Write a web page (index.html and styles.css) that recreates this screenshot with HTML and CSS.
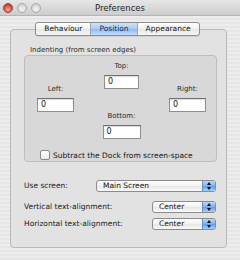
FILE: index.html
```html
<!DOCTYPE html>
<html lang="en">
    <head>
        <meta charset="utf-8">
        <link rel="stylesheet" href="styles.css">
    </head>
    <body>
        <div class="window">
            <header class="titlebar">
                <div class="lights">
                    <span class="light close"></span>
                    <span class="light"></span>
                    <span class="light"></span>
                </div>
                <div class="title">Preferences</div>
            </header>
            <main class="content">
                <nav class="tabs">
                    <div class="tab">Behaviour</div>
                    <div class="tab active">Position</div>
                    <div class="tab">Appearance</div>
                </nav>
                <section class="panel">
                    <div class="group-label">Indenting (from screen edges)</div>
                    <div class="group">
                        <div class="edges">
                            <div class="edge side">
                                <label>Left:</label>
                                <div class="field">0</div>
                            </div>
                            <div class="edge middle">
                                <label>Top:</label>
                                <div class="field">0</div>
                                <label class="bottom-label">Bottom:</label>
                                <div class="field wide">0</div>
                            </div>
                            <div class="edge side">
                                <label>Right:</label>
                                <div class="field">0</div>
                            </div>
                        </div>
                        <div class="check-row">
                            <span class="checkbox"></span>
                            <span>Subtract the Dock from screen-space</span>
                        </div>
                    </div>
                    <div class="row first">
                        <span class="row-label">Use screen:</span>
                        <div class="popup screen">
                            <span>Main Screen</span>
                            <span class="arrows"></span>
                        </div>
                    </div>
                    <div class="row">
                        <span class="row-label">Vertical text-alignment:</span>
                        <div class="popup small">
                            <span>Center</span>
                            <span class="arrows"></span>
                        </div>
                    </div>
                    <div class="row">
                        <span class="row-label">Horizontal text-alignment:</span>
                        <div class="popup small">
                            <span>Center</span>
                            <span class="arrows"></span>
                        </div>
                    </div>
                </section>
            </main>
        </div>
    </body>
</html>
```

FILE: styles.css
```css
html,body{
    margin: 0;
    padding: 0;
}
body{
    width:240px;
    height:260px;
    overflow:hidden;
    font-family:"DejaVu Sans", sans-serif;
    font-size:7.5px;
    color:#141414;
}
.window{
    height:260px;
    background:#ebebeb repeating-linear-gradient(#ededed 0, #ededed 2px, #e6e6e6 2px, #e6e6e6 4px);
}
.titlebar{
    height:15px;
    display:flex;
    align-items:center;
    position:relative;
    background:linear-gradient(#e6e6e6, #cdcdcd);
    border-bottom:1px solid #b4b4b4;
}
.lights{
    display:flex;
    gap:4px;
    padding-left:3px;
}
.light{
    width:10px;
    height:10px;
    border-radius:50%;
    box-sizing:border-box;
    border:1px solid #a8a8a8;
    background:radial-gradient(circle at 50% 70%, #f4f4f4, #c8c8c8);
}
.light.close{
    border-color:#9a3a38;
    background:radial-gradient(circle at 50% 70%, #f5a8a0, #c9423c 70%);
}
.title{
    position:absolute;
    left:0;
    right:0;
    text-align:center;
    font-size:8.5px;
    color:#262626;
}
.content{
    padding:6px 13px 0 10px;
}
.tabs{
    display:flex;
    width:fit-content;
    margin:0 auto -7px;
    position:relative;
    left:-1px;
    border:1px solid #8e8e8e;
    border-radius:3px;
    background:linear-gradient(#ffffff, #f1f1f1 50%, #e6e6e6 51%, #f7f7f7);
    box-shadow:0 1px 0 rgba(0,0,0,0.08);
}
.tab{
    height:12px;
    line-height:12px;
    padding:0 8px;
    border-left:1px solid #a6a6a6;
}
.tab:first-child{
    border-left:none;
}
.tab.active{
    background:linear-gradient(#cfe4fb, #a8cbf3 50%, #8dbbee 51%, #c2dcf8);
    color:#0e2d63;
}
.panel{
    height:219px;
    box-sizing:border-box;
    border:1px solid #b8b8b8;
    border-radius:4px;
    background:#e2e2e2;
    padding:15px 9px 0 13px;
}
.group-label{
    padding-left:6px;
    height:10px;
    line-height:10px;
    font-size:7px;
    color:#2a2a2a;
}
.group{
    height:107px;
    box-sizing:border-box;
    border:1px solid #bdbdbd;
    border-radius:4px;
    background:#d8d8d8;
    padding:4px 10px 0 12px;
}
.edges{
    display:flex;
    justify-content:space-between;
}
.edge{
    display:flex;
    flex-direction:column;
    align-items:center;
}
.edge label{
    height:12px;
    line-height:12px;
    font-size:7px;
    color:#2a2a2a;
}
.side{
    padding-top:23px;
}
.field{
    width:37px;
    height:14px;
    box-sizing:border-box;
    margin-top:3px;
    border:1px solid #8f8f8f;
    border-top-color:#6f6f6f;
    background:#fff;
    font-size:8px;
    line-height:12px;
    padding-left:3px;
    box-shadow:inset 0 1px 1px rgba(0,0,0,0.15);
}
.middle .field{
    width:35px;
}
.middle .field.wide{
    width:38px;
}
.bottom-label{
    margin-top:21px;
}
.check-row{
    display:flex;
    align-items:center;
    gap:3px;
    margin-top:11px;
    padding-left:3px;
}
.checkbox{
    width:8px;
    height:8px;
    border:1px solid #8a8a8a;
    border-radius:2px;
    background:linear-gradient(#ffffff, #e9e9e9);
}
.row{
    display:flex;
    align-items:center;
    justify-content:space-between;
    height:13px;
    margin-top:4px;
    padding-right:1px;
}
.row.first{
    margin-top:17px;
    margin-bottom:8px;
}
.row-label{
    color:#202020;
}
.popup{
    height:12px;
    box-sizing:border-box;
    border:1px solid #8c8c8c;
    border-radius:3px;
    display:flex;
    align-items:center;
    justify-content:space-between;
    padding-left:6px;
    background:linear-gradient(#ffffff, #f1f1f1 50%, #e6e6e6 51%, #fafafa);
    overflow:hidden;
}
.popup.screen{
    width:120px;
}
.popup.small{
    width:64px;
}
.arrows{
    width:12px;
    height:100%;
    position:relative;
    background:linear-gradient(#b9d6f6, #7fb1ec 50%, #5f9de6 51%, #a9cff5);
    border-left:1px solid #6b8fbf;
}
.arrows::before,.arrows::after{
    content:'';
    position:absolute;
    left:4px;
    width:0;
    height:0;
    border-left:2px solid transparent;
    border-right:2px solid transparent;
}
.arrows::before{
    top:1px;
    border-bottom:3px solid #111;
}
.arrows::after{
    bottom:1px;
    border-top:3px solid #111;
}
```
